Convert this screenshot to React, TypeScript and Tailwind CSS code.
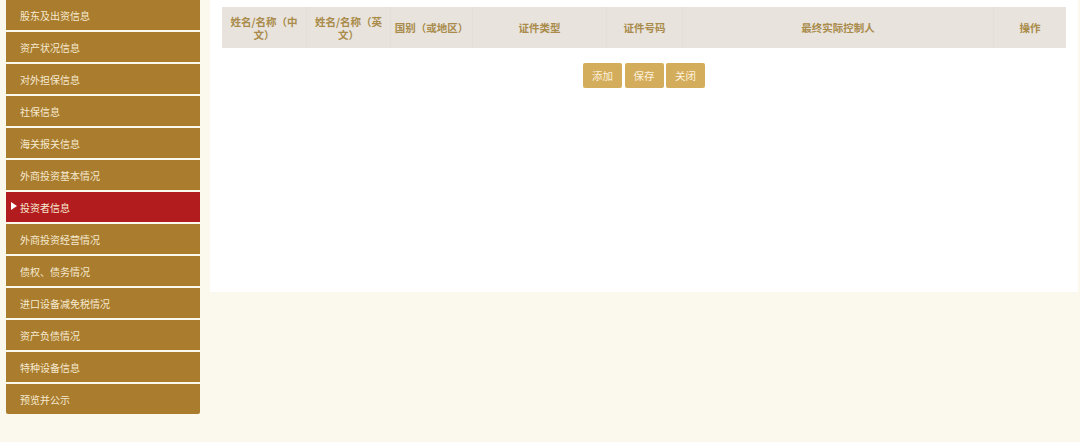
import React from "react";

const items = [
  "股东及出资信息",
  "资产状况信息",
  "对外担保信息",
  "社保信息",
  "海关报关信息",
  "外商投资基本情况",
  "投资者信息",
  "外商投资经营情况",
  "债权、债务情况",
  "进口设备减免税情况",
  "资产负债情况",
  "特种设备信息",
  "预览并公示",
];

const cols: { label: React.ReactNode; w: string }[] = [
  { label: <>姓名/名称（中<br />文）</>, w: "w-[85px]" },
  { label: <>姓名/名称（英<br />文）</>, w: "w-[84px]" },
  { label: "国别（或地区）", w: "w-[82px]" },
  { label: "证件类型", w: "w-[134px]" },
  { label: "证件号码", w: "w-[76px]" },
  { label: "最终实际控制人", w: "w-[311px]" },
  { label: "操作", w: "flex-1" },
];

export default function App() {
  return (
    <div
      className="w-[1080px] h-[442px] bg-[#fbf8ee] flex overflow-hidden"
      style={{ fontFamily: '"Noto Sans CJK SC", "Noto Sans", sans-serif' }}
    >
      <div className="w-[194px] ml-[6px] flex flex-col gap-[2px] shrink-0">
        {items.map((t, i) => {
          const active = i === 6;
          return (
            <div
              key={t}
              className={`h-[30px] relative flex items-center pl-[14px] text-[10px] text-[#f6ead0] ${
                active ? "bg-[#b21c1f]" : "bg-[#a97c2e]"
              } ${i === items.length - 1 ? "rounded-b-[2px]" : ""}`}
            >
              {active && (
                <span className="absolute left-[5px] top-[10px] w-0 h-0 border-y-[4px] border-y-transparent border-l-[6px] border-l-white" />
              )}
              {t}
            </div>
          );
        })}
      </div>
      <div className="ml-[10px] w-[868px] h-[292px] bg-white pt-[7px] px-[12px]">
        <div className="flex h-[41px] bg-[#e8e3dc]">
          {cols.map((c, i) => (
            <div
              key={i}
              className={`${c.w} flex items-center justify-center text-center text-[10.5px] leading-[13px] font-bold text-[#a98b4b] ${
                i < cols.length - 1 ? "border-r border-[#e5dfd7]" : ""
              }`}
            >
              <span>{c.label}</span>
            </div>
          ))}
        </div>
        <div className="flex justify-center gap-[2.5px] mt-[15px]">
          {["添加", "保存", "关闭"].map((b) => (
            <div
              key={b}
              className="w-[39px] h-[25px] rounded-[2px] bg-[#d4ad5c] text-[#fbf1dc] text-[10.5px] flex items-center justify-center"
            >
              {b}
            </div>
          ))}
        </div>
      </div>
    </div>
  );
}
